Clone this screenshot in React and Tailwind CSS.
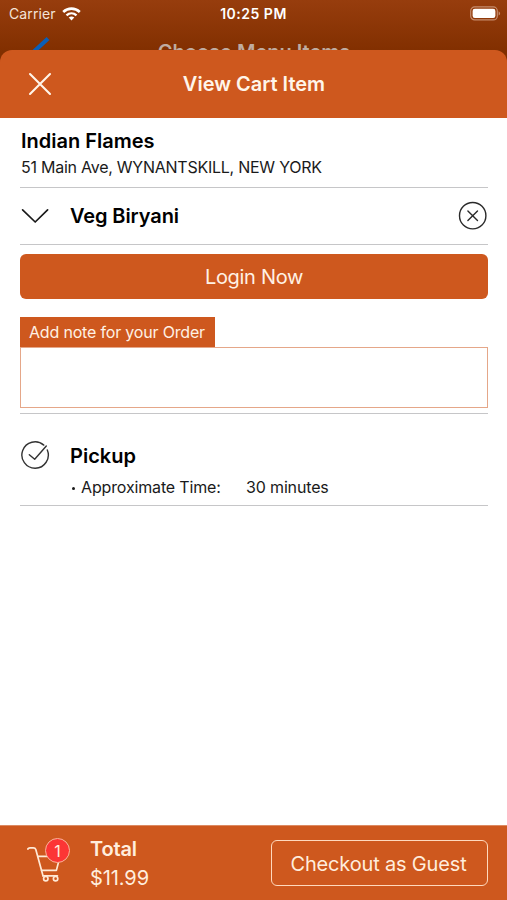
const BackIcon = () => (
  <svg width="20" height="14" viewBox="0 0 20 14" fill="none" className="absolute left-8 top-[10px]">
    <path d="M14.5 3 L2 14.5" stroke="#0a5fb8" strokeWidth="4.2" strokeLinecap="square" />
  </svg>
);

const WifiIcon = () => (
  <svg width="19" height="14" viewBox="0 0 19 14" fill="none">
    <path d="M1.2 5 C6 0.5 13 0.5 17.8 5" stroke="#fff" strokeWidth="2.6" />
    <path d="M4.5 8.4 C7.4 5.7 11.6 5.7 14.5 8.4" stroke="#fff" strokeWidth="2.4" />
    <path d="M6.7 10.6 C8.4 9.1 10.6 9.1 12.3 10.6 L9.5 13.6 Z" fill="#fff" />
  </svg>
);

const BatteryIcon = () => (
  <svg width="31" height="15" viewBox="0 0 31 15" fill="none">
    <rect x="0.7" y="0.9" width="26.6" height="13" rx="4" stroke="#c58c6d" strokeWidth="1.2" />
    <rect x="2.6" y="2.8" width="22.8" height="9.2" rx="2.2" fill="#fff" />
    <path d="M28.6 5.2 C30.6 6 30.6 8.8 28.6 9.6 Z" fill="#c58c6d" />
  </svg>
);

const CloseIcon = () => (
  <svg width="24" height="24" viewBox="0 0 24 24" fill="none" stroke="#fff5ea" strokeWidth="2.1" strokeLinecap="round">
    <path d="M2 2 L22 22 M22 2 L2 22" />
  </svg>
);

const ChevronIcon = () => (
  <svg width="28" height="16" viewBox="0 0 28 16" fill="none" stroke="#1a1a1a" strokeWidth="1.7" strokeLinecap="round" strokeLinejoin="round">
    <path d="M1.6 1.8 L14.2 14 L26.6 1.8" />
  </svg>
);

const RemoveIcon = () => (
  <svg width="30" height="30" viewBox="0 0 30 30" fill="none" stroke="#2a2a2a" strokeWidth="1.4" strokeLinecap="round">
    <circle cx="14.7" cy="14.7" r="13.2" />
    <path d="M9.9 9.9 L19.5 19.5 M19.5 9.9 L9.9 19.5" />
  </svg>
);

const CheckIcon = () => (
  <svg width="30" height="30" viewBox="0 0 30 30" fill="none" stroke="#333" strokeWidth="1.4" strokeLinecap="round" strokeLinejoin="round">
    <path d="M27.3 10 A13.2 13.2 0 1 1 23.8 5.1" />
    <path d="M9.3 14.7 L14.7 19.3 L26.3 6" />
  </svg>
);

const CartIcon = () => (
  <svg width="38" height="38" viewBox="0 0 38 38" fill="none" stroke="#ffe9d6" strokeWidth="1.7" strokeLinecap="round" strokeLinejoin="round">
    <path d="M1.8 3 Q2.4 1.8 4 1.8 H7.4 Q9.2 1.8 9.8 3.6 L17 29.8" />
    <path d="M12 10.4 H34 L30.4 24.4 H15.6" />
    <path d="M17 29.8 H31.4" />
    <circle cx="19.8" cy="32.7" r="2.2" />
    <circle cx="29.6" cy="32.7" r="2.2" />
  </svg>
);

const Divider = () => <div className="h-px bg-[#c6c6c8]" />;

function Header() {
  return (
    <header className="h-[118px] shrink-0 bg-[linear-gradient(#973d0d_0px,#812f00_52px)]">
      <div className="grid h-[27px] grid-cols-3 items-center text-[14px] leading-none text-white">
        <div className="flex items-center gap-[6px] pl-[9px]">
          <span className="tracking-[0.1px] text-[#f4e3d8]">Carrier</span>
          <WifiIcon />
        </div>
        <span className="text-center font-semibold tracking-[0.5px]">10:25 PM</span>
        <div className="flex justify-end pr-[6px]">
          <BatteryIcon />
        </div>
      </div>
      <div className="relative h-[23px] text-center">
        <BackIcon />
        <p className="pl-px pt-[13px] text-[20px] font-semibold leading-[24px] text-[#bfaca0]">Choose Menu Items</p>
      </div>
      <div className="relative grid h-[68px] grid-cols-[80px_1fr_80px] items-center rounded-t-[12px] bg-[#ce581e]">
        <button className="flex justify-center">
          <CloseIcon />
        </button>
        <h1 className="pl-px text-center text-[20px] font-semibold leading-6 text-[#fff5ea]">View Cart Item</h1>
      </div>
    </header>
  );
}

function Footer() {
  return (
    <footer className="flex h-[75px] shrink-0 items-center border-t border-[#dc8a62] bg-[#ce581e] pl-5 pr-[19px] text-[#ffeddd]">
      <div className="relative ml-[6px] mt-1 h-[38px] w-[38px]">
        <CartIcon />
        <span className="absolute left-[19px] top-[-8px] flex h-[25px] w-[25px] items-center justify-center rounded-full border-[1.5px] border-[#f9b59c] bg-[#fc3535] text-[16px] leading-none">
          1
        </span>
      </div>
      <div className="ml-[26px] mt-[2px] flex-1 text-[20px] leading-[29px]">
        <p className="font-semibold tracking-[-0.2px]">Total</p>
        <p className="tracking-[-0.1px]">$11.99</p>
      </div>
      <button className="h-[46px] w-[217px] rounded-[6px] border-[1.5px] border-[#ffd9bd] pr-[2px] pt-px text-[20px] tracking-[-0.17px]">
        Checkout as Guest
      </button>
    </footer>
  );
}

export default function App() {
  return (
    <div className="flex h-[900px] w-[507px] flex-col overflow-hidden bg-white font-['Inter',sans-serif] text-[#1a1a1a]">
      <Header />
      <main className="flex-1 pl-5 pr-[19px]">
        <div className="flex h-[69px] flex-col pl-px pt-[10px]">
          <h2 className="text-[20px] font-semibold leading-[26px] text-black">Indian Flames</h2>
          <p className="text-[16px] leading-[26px] tracking-[-0.25px]">51 Main Ave, WYNANTSKILL, NEW YORK</p>
        </div>
        <Divider />
        <div className="flex h-[56px] items-center pl-px">
          <ChevronIcon />
          <h3 className="ml-[21px] flex-1 text-[20px] font-semibold tracking-[-0.1px] text-black">Veg Biryani</h3>
          <RemoveIcon />
        </div>
        <Divider />
        <button className="mt-[9px] h-[45px] w-full rounded-[6px] bg-[#ce581e] pt-px text-[20px] tracking-[-0.3px] text-[#fff1e4]">
          Login Now
        </button>
        <div className="mt-[18px] flex">
          <label className="h-[30px] w-[195px] bg-[#ce581e] pl-[9px] text-[16px] leading-[31px] tracking-[-0.18px] text-[#fff1e4]">
            Add note for your Order
          </label>
        </div>
        <div className="mb-[5px] h-[61px] border border-[#e5a789]" />
        <Divider />
        <div className="flex h-[91px] pt-[26px]">
          <CheckIcon />
          <div className="ml-[20px] mt-px">
            <h3 className="text-[20px] font-semibold leading-[30px] text-black">Pickup</h3>
            <p className="flex items-center text-[16px] leading-[33px] tracking-[-0.15px]">
              <span className="ml-[2px] mr-[6px] mt-[2px] h-[3px] w-[3px] rounded-full bg-[#1a1a1a]" />
              <span className="w-[165px]">Approximate Time:</span>
              <span>30 minutes</span>
            </p>
          </div>
        </div>
        <Divider />
      </main>
      <Footer />
    </div>
  );
}
